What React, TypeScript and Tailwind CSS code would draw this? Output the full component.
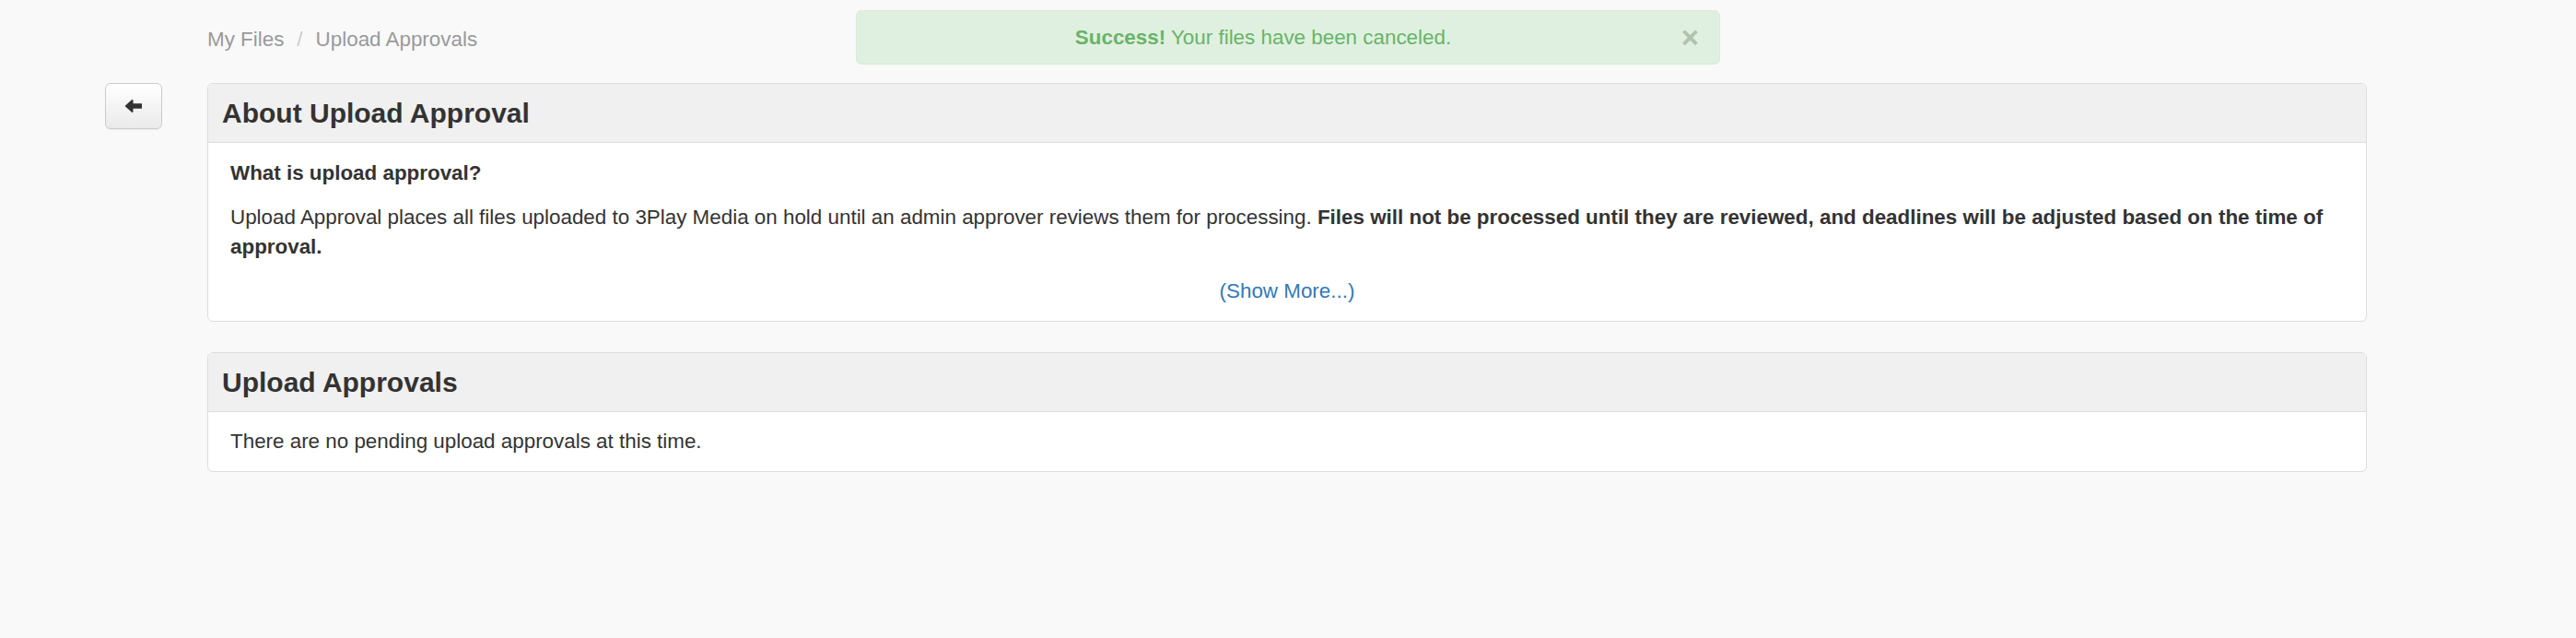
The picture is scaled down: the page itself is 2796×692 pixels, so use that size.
import React from "react";

function ArrowLeft() {
  return (
    <svg width="20" height="16" viewBox="0 0 20 16" aria-hidden="true">
      <path d="M0.5 8 L8.5 0.8 L9.5 1.8 L9.5 5.2 L19 5.2 L19 10.8 L9.5 10.8 L9.5 14.2 L8.5 15.2 Z" fill="#333333" />
    </svg>
  );
}

export default function App() {
  return (
    <div
      className="relative min-h-[692px] w-full bg-[#f9f9f9] text-[#333333]"
      style={{ fontFamily: '"Liberation Sans", Arial, Helvetica, sans-serif' }}
    >
      {/* Alert overlay */}
      <div className="absolute left-1/2 top-[11px] z-10 flex h-[59px] w-[938px] -translate-x-1/2 items-center justify-center rounded-[6px] border border-[#d8ecd5] bg-[#e0f0e0] pr-[54px] text-[22.4px] leading-[32px] text-[#68b468]">
        <span>
          <strong className="font-bold">Success!</strong> Your files have been canceled.
        </span>
        <span className="absolute right-[22px] top-[12px] text-[33px] font-bold leading-[33px] text-[#afc3ad]">×</span>
      </div>

      <div className="flex pl-[114px] pt-[27px]">
        {/* back button column */}
        <div className="mt-[63px] w-[62px] shrink-0">
          <button className="flex h-[50px] w-[62px] items-center justify-center rounded-[6px] border border-[#cccccc] bg-gradient-to-b from-[#ffffff] to-[#eaeaea] shadow-[0_1px_1px_rgba(0,0,0,0.06)]">
            <ArrowLeft />
          </button>
        </div>

        {/* main column */}
        <div className="ml-[49px] w-[2344px] shrink-0">
          <nav className="flex h-[32px] items-center text-[22.4px] leading-[32px]">
            <span className="text-[#999999]">My Files</span>
            <span className="mx-[14px] text-[#cccccc]">/</span>
            <span className="text-[#999999]">Upload Approvals</span>
          </nav>

          <section className="mt-[31px] rounded-[6px] border border-[#dddddd] bg-white">
            <div className="rounded-t-[6px] border-b border-[#dddddd] bg-[#f0f0f0] px-[15px] py-[15px]">
              <h3 className="text-[30px] font-bold leading-[33px] text-[#333333]">About Upload Approval</h3>
            </div>
            <div className="px-[24px] pb-[16px] pt-[21px] text-[22.4px] leading-[32px]">
              <div className="mb-[19px] font-bold leading-[24.6px]">What is upload approval?</div>
              <p className="mb-[16px]">
                Upload Approval places all files uploaded to 3Play Media on hold until an admin approver reviews them for processing.{" "}
                <strong className="font-bold">
                  Files will not be processed until they are reviewed, and deadlines will be adjusted based on the time of approval.
                </strong>
              </p>
              <div className="text-center">
                <span className="text-[#337ab7]">(Show More...)</span>
              </div>
            </div>
          </section>

          <section className="mt-[33px] rounded-[6px] border border-[#dddddd] bg-white">
            <div className="rounded-t-[6px] border-b border-[#dddddd] bg-[#f0f0f0] px-[15px] py-[15px]">
              <h3 className="text-[30px] font-bold leading-[33px] text-[#333333]">Upload Approvals</h3>
            </div>
            <div className="px-[24px] py-[16px] text-[22.4px] leading-[32px]">
              There are no pending upload approvals at this time.
            </div>
          </section>
        </div>
      </div>
    </div>
  );
}
